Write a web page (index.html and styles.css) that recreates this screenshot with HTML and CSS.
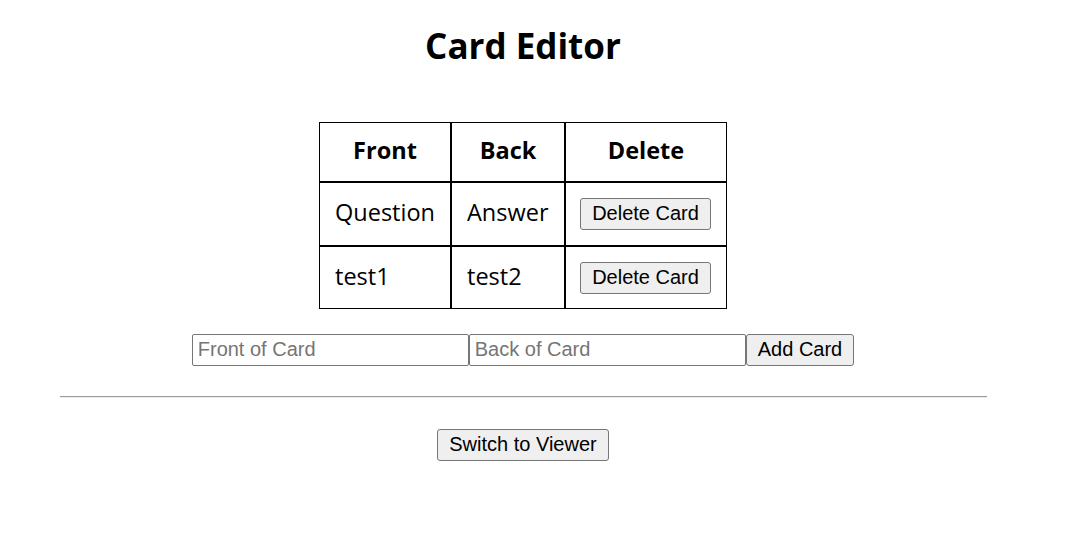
FILE: index.html
```html
<!DOCTYPE html>
<html lang="en">
<head>
<meta charset="utf-8">
<title>Card Editor</title>
<link rel="stylesheet" href="styles.css">
</head>
<body>
<div class="page">
  <h1 class="title">Card Editor</h1>
  <table class="cards">
    <thead>
      <tr>
        <th class="col-front">Front</th>
        <th class="col-back">Back</th>
        <th class="col-delete">Delete</th>
      </tr>
    </thead>
    <tbody>
      <tr>
        <td class="text-cell">Question</td>
        <td class="text-cell">Answer</td>
        <td class="btn-cell"><button class="btn btn-delete" type="button">Delete Card</button></td>
      </tr>
      <tr class="last-row">
        <td class="text-cell">test1</td>
        <td class="text-cell">test2</td>
        <td class="btn-cell"><button class="btn btn-delete" type="button">Delete Card</button></td>
      </tr>
    </tbody>
  </table>
  <div class="add-row">
    <input class="field" type="text" placeholder="Front of Card">
    <input class="field" type="text" placeholder="Back of Card">
    <button class="btn" type="button">Add Card</button>
  </div>
  <hr class="divider">
  <button class="btn btn-switch" type="button">Switch to Viewer</button>
</div>
</body>
</html>
```

FILE: styles.css
```css
html, body {
  margin: 0;
  padding: 0;
  background: #ffffff;
}

.page {
  width: 1030px;
  margin-left: 8px;
  display: flex;
  flex-direction: column;
  align-items: center;
  font-family: "Open Sans", "Noto Sans", sans-serif;
  color: #000;
}

.title {
  margin: 26px 0 0 0;
  font-size: 35px;
  line-height: 40px;
  font-weight: 700;
}

.cards {
  margin-top: 56px;
  border-collapse: separate;
  border-spacing: 0;
  table-layout: fixed;
  width: 408px;
  font-size: 23.5px;
}

.cards th,
.cards td {
  box-sizing: border-box;
  border: 1px solid #000;
  line-height: 28px;
  vertical-align: middle;
}

.cards th {
  font-weight: 700;
  text-align: center;
  padding: 13px 14px 17px 14px;
}

.cards td {
  text-align: left;
  padding: 15px 14px 15px 15px;
}

.cards td.text-cell {
  padding-top: 13px;
  padding-bottom: 17px;
}

.cards td.btn-cell {
  padding-left: 14px;
}

.cards .last-row td.btn-cell {
  padding-bottom: 14px;
}

.cards .last-row td.text-cell {
  padding-bottom: 16px;
}

.col-front { width: 132px; }
.col-back { width: 114px; }
.col-delete { width: 162px; }

.btn {
  box-sizing: border-box;
  height: 32px;
  padding: 0 11px 2px 11px;
  margin: 0;
  border: 1px solid #767676;
  border-radius: 3px;
  background: #efefef;
  color: #000;
  font-family: "Liberation Sans", Arial, sans-serif;
  font-size: 20px;
  line-height: 28px;
  display: block;
}

.btn-delete {
  width: 131px;
  padding: 0 0 2px 0;
}

.add-row {
  margin-top: 25px;
  display: flex;
}

.field {
  box-sizing: border-box;
  width: 277px;
  height: 32px;
  margin: 0;
  padding: 0 5px 1px 5px;
  border: 1px solid #767676;
  border-radius: 2px;
  font-family: "Liberation Sans", Arial, sans-serif;
  font-size: 20px;
  color: #000;
  background: #fff;
}

.field::placeholder {
  color: #757575;
}

.divider {
  box-sizing: border-box;
  width: 90%;
  height: 2px;
  margin: 30px 0 0 0;
  border: 0;
  border-top: 1px solid #9a9a9a;
  border-bottom: 1px solid #eeeeee;
}

.btn-switch {
  margin-top: 31px;
}
```
